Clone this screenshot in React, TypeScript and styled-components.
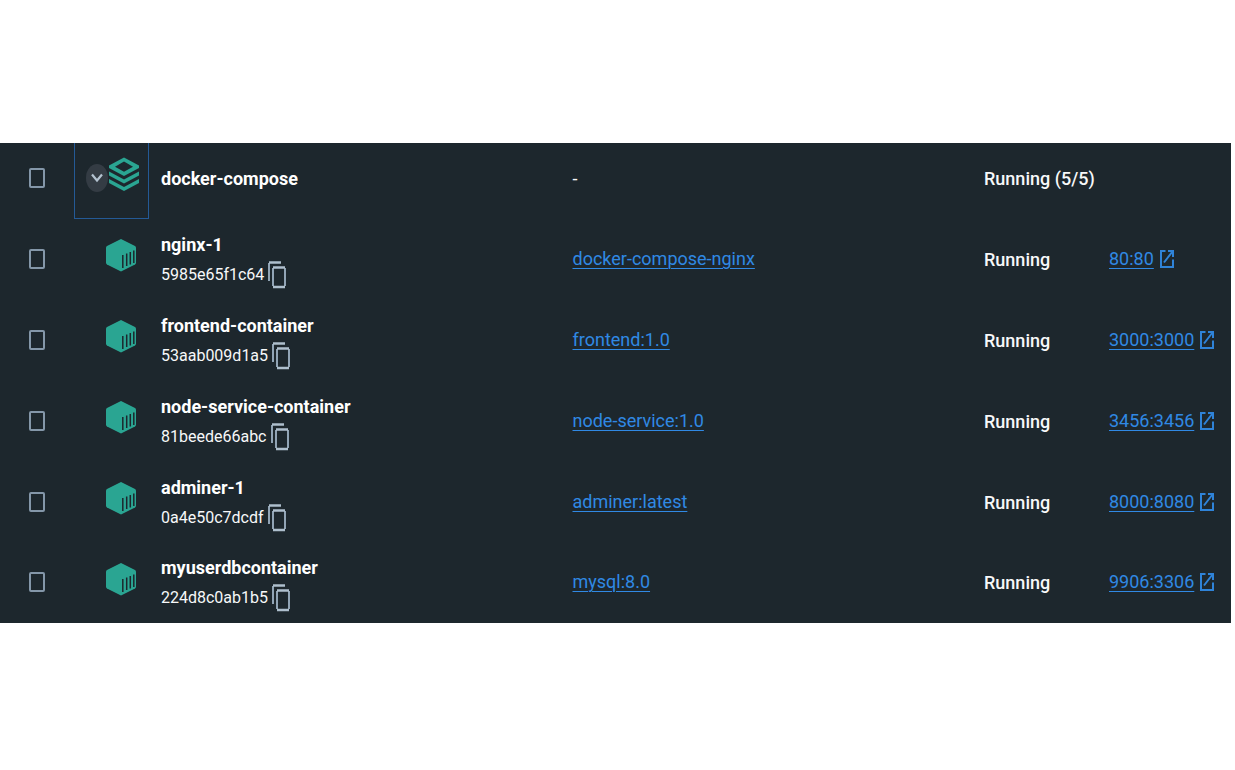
import React from "react";
import styled, { createGlobalStyle } from "styled-components";

const GlobalStyle = createGlobalStyle`
  * { box-sizing: border-box; }
  body {
    margin: 0;
    background: #ffffff;
    font-family: Roboto, "Liberation Sans", sans-serif;
  }
`;

const Page = styled.main`
  padding: 143px 4px 0 0;
`;

const Table = styled.table`
  width: 100%;
  table-layout: fixed;
  border-collapse: collapse;
  background: #1d272d;
  color: #f7f8f9;
`;

const Col = styled.col<{ $width?: number }>`
  width: ${(p) => (p.$width ? `${p.$width}px` : "auto")};
`;

const Row = styled.tr<{ $group?: boolean }>`
  height: ${(p) => (p.$group ? 76 : 81)}px;
  &:last-child { height: 80px; }
`;

const Cell = styled.td`
  padding: 0 0 0 12px;
  font-size: 18px;
  line-height: 24px;
  white-space: nowrap;
  vertical-align: middle;
`;

const GroupCell = styled(Cell)`
  padding-bottom: 4px;
`;

const LinkCell = styled(Cell)`
  padding-bottom: 2px;
`;

const CheckCell = styled.td<{ $group?: boolean }>`
  padding: 0 0 ${(p) => (p.$group ? 6 : 2)}px;
  text-align: center;
  vertical-align: middle;
`;

const Check = styled.input`
  appearance: none;
  display: block;
  width: 16px;
  height: 20px;
  margin: 0 auto;
  border: 2px solid #8497a9;
  border-radius: 2px;
`;

const IconCell = styled.td`
  padding: 0 0 8px 31px;
  vertical-align: middle;
  svg { display: block; }
`;

const FocusCell = styled.td`
  padding: 0;
  height: 76px;
`;

const FocusBox = styled.div`
  display: flex;
  align-items: center;
  height: 76px;
  padding: 0 0 12px 11px;
  border: 1px solid #245a96;
  border-top: 0;
`;

const Expand = styled.button`
  display: flex;
  align-items: center;
  justify-content: center;
  width: 22px;
  height: 28px;
  margin-top: 6px;
  padding: 0;
  border: 0;
  border-radius: 50%;
  background: #343c44;
`;

const Name = styled.div`
  font-size: 18px;
  font-weight: 700;
  line-height: 24px;
  color: #ffffff;
`;

const IdLine = styled.div`
  display: flex;
  align-items: center;
  gap: 4px;
  height: 30px;
  padding-top: 6px;
  font-size: 16px;
  line-height: 24px;
`;

const CopyButton = styled.button`
  display: flex;
  padding: 0;
  border: 0;
  background: none;
`;

const Link = styled.a`
  font-weight: 400;
  color: #3089e4;
  text-decoration: underline;
  text-decoration-thickness: 1px;
  text-underline-offset: 3px;
`;

const Status = styled.span`
  font-weight: 500;
`;

const Port = styled.div`
  display: flex;
  align-items: center;
  gap: 6px;
`;

const StackIcon = () => (
  <svg width="32" height="35" viewBox="0 0 32 35" aria-hidden="true">
    <path
      fill="#2aa592"
      fillRule="evenodd"
      d="M16 0.500 31 8.500v2.500L16 19 1 11V8.500ZM16 4.500 7 9.700l9 5 9-5Z"
    />
    <path fill="#2aa592" d="M1 14.500l15 8 15-8v4l-15 8-15-8ZM1 22l15 8 15-8v4l-15 8-15-8Z" />
  </svg>
);

const ContainerIcon = () => (
  <svg width="32" height="33" viewBox="0 0 32 33" aria-hidden="true">
    <path
      fill="#2aa592"
      d="M16 0 30 7Q31 7.500 31 9V23.500Q31 25 30 25.500L16 32.500 2 25.500Q1 25 1 23.500V9Q1 7.500 2 7Z"
    />
    <path
      stroke="#1d272d"
      strokeWidth="1.500"
      d="M17.800 16v13M21.700 14.500v12.500M25.300 13v12.500M28.800 11.500v12.500"
    />
  </svg>
);

const ChevronIcon = () => (
  <svg width="12" height="10" viewBox="0 0 12 10" fill="none" aria-hidden="true">
    <path d="M1 1.500 6 7.500 11 1.500" stroke="#b4c3d0" strokeWidth="2.200" />
  </svg>
);

const CopyIcon = () => (
  <svg width="19" height="28" viewBox="0 0 19 28" fill="none" aria-hidden="true">
    <path d="M1 20V2" stroke="#91a4b5" strokeWidth="2" />
    <path d="M1 1.500H13" stroke="#aebfcd" strokeWidth="2.500" />
    <path d="M5 7v18M17 7v18" stroke="#91a4b5" strokeWidth="2" />
    <path d="M5 6.500H17M5 26H17" stroke="#aebfcd" strokeWidth="2.500" />
  </svg>
);

const OpenIcon = () => (
  <svg width="14" height="18" viewBox="0 0 14 18" fill="none" aria-hidden="true">
    <path d="M5.500 1H1V17H13V9.500" stroke="#2f83d8" strokeWidth="2" />
    <path d="M8 1H13V7M12.500 1.500 4 12.500" stroke="#2f83d8" strokeWidth="2" />
  </svg>
);

const containers = [
  { name: "nginx-1", id: "5985e65f1c64", image: "docker-compose-nginx", port: "80:80" },
  { name: "frontend-container", id: "53aab009d1a5", image: "frontend:1.0", port: "3000:3000" },
  { name: "node-service-container", id: "81beede66abc", image: "node-service:1.0", port: "3456:3456" },
  { name: "adminer-1", id: "0a4e50c7dcdf", image: "adminer:latest", port: "8000:8080" },
  { name: "myuserdbcontainer", id: "224d8c0ab1b5", image: "mysql:8.0", port: "9906:3306" },
];

export default function App() {
  return (
    <>
      <GlobalStyle />
      <Page>
        <Table>
          <colgroup>
            <Col $width={74} />
            <Col $width={75} />
            <Col />
            <Col />
            <Col $width={125} />
            <Col $width={134} />
          </colgroup>
          <tbody>
            <Row $group>
              <CheckCell $group>
                <Check type="checkbox" aria-label="Select docker-compose" />
              </CheckCell>
              <FocusCell>
                <FocusBox>
                  <Expand type="button" aria-label="Collapse docker-compose">
                    <ChevronIcon />
                  </Expand>
                  <StackIcon />
                </FocusBox>
              </FocusCell>
              <GroupCell>
                <Name>docker-compose</Name>
              </GroupCell>
              <GroupCell>-</GroupCell>
              <GroupCell>
                <Status>Running (5/5)</Status>
              </GroupCell>
              <GroupCell />
            </Row>
            {containers.map((c) => (
              <Row key={c.id}>
                <CheckCell>
                  <Check type="checkbox" aria-label={`Select ${c.name}`} />
                </CheckCell>
                <IconCell>
                  <ContainerIcon />
                </IconCell>
                <Cell>
                  <Name>{c.name}</Name>
                  <IdLine>
                    {c.id}
                    <CopyButton type="button" aria-label={`Copy ID of ${c.name}`}>
                      <CopyIcon />
                    </CopyButton>
                  </IdLine>
                </Cell>
                <LinkCell>
                  <Link href="#image">{c.image}</Link>
                </LinkCell>
                <Cell>
                  <Status>Running</Status>
                </Cell>
                <LinkCell>
                  <Port>
                    <Link href="#port">{c.port}</Link>
                    <OpenIcon />
                  </Port>
                </LinkCell>
              </Row>
            ))}
          </tbody>
        </Table>
      </Page>
    </>
  );
}
